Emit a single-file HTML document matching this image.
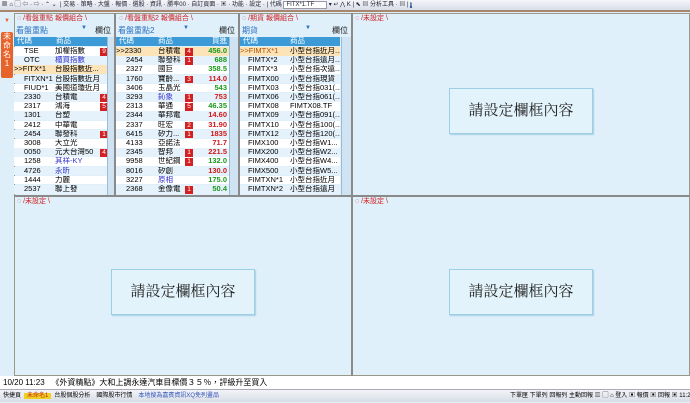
<!DOCTYPE html>
<html><head><meta charset="utf-8"><style>
*{margin:0;padding:0;box-sizing:border-box}
body{width:690px;height:402px;overflow:hidden;background:#dfeffa;font-family:"Liberation Sans","Noto Sans CJK TC",sans-serif;position:relative;font-size:8px}
.a{position:absolute}
.tb{left:0;top:0;width:690px;height:12px;background:linear-gradient(#f4f6fa,#d8dde8);border-bottom:2px solid #a8876e;font-size:6px;color:#223;white-space:nowrap;line-height:11px}
.tab{font-size:7px;color:#d02020;line-height:8px}
.row{position:absolute;height:8.7px;line-height:8.7px;font-size:7.5px;white-space:nowrap;overflow:hidden}
.box{background:#e2f3fb;border:1px solid #9ccfe6;box-shadow:1px 1px 1px #a8d0e0;font-size:15px;color:#222;text-align:center;font-family:"Liberation Serif","Noto Serif CJK SC",serif}
.b{display:inline-block;background:#d42020;color:#fff;width:8px;height:8px;line-height:8px;text-align:center;font-size:6.5px}
.sb{background:#cfe3f3;border-left:1px solid #9bbcd8}
.cl{overflow:hidden;display:inline-block}
</style></head><body>
<div class="a tb">&nbsp;▦ ⌂ ▢ ⇦ · ⇨ · ⌃ ⌄ &nbsp;| 交易 · 策略 · 大盤 · 報價 · 選股 · 資訊 · 勝率00 · 自訂頁面 · ▣ · 功能 · 設定 · | 代碼 <span style="background:#fff;border:1px solid #99a;padding:0 12px 0 2px">FITX*1.TF</span> ▾ ↵ ⋀ K | ⬉ ▤ 分析工具 · ▤ | <span style="background:#3b5998;color:#fff">f</span></div>
<div class="a" style="left:0;top:14px;width:14px;height:362px;background:#dfeffa"></div>
<div class="a" style="left:1px;top:32px;width:12px;height:46px;background:#e8632a;color:#fff;font-size:8px;line-height:9px;text-align:center;border-radius:2px">未命名1</div>
<div class="a" style="left:4px;top:18px;color:#e8632a;font-size:6px">▼</div>

<div class="a" style="left:14px;top:13px;width:676px;height:363px;background:#dff0fb;border:1px solid #998"></div>
<div class="a" style="left:351px;top:13px;width:2px;height:363px;background:#8a8a8a"></div>
<div class="a" style="left:14px;top:195px;width:676px;height:2px;background:#8a8a8a"></div>
<div class="a" style="left:114px;top:13px;width:2px;height:182px;background:#8a8a8a"></div>
<div class="a" style="left:238px;top:13px;width:2px;height:182px;background:#8a8a8a"></div>

<div class="a tab" style="left:17px;top:15px">◌ /看盤重點 報價組合 \</div>
<div class="a tab" style="left:119px;top:15px">◌ /看盤重點2 報價組合 \</div>
<div class="a tab" style="left:242px;top:15px">◌ /期貨 報價組合 \</div>
<div class="a tab" style="left:355px;top:15px">◌ /未設定 \</div>
<div class="a tab" style="left:17px;top:198px">◌ /未設定 \</div>
<div class="a tab" style="left:355px;top:198px">◌ /未設定 \</div>

<div class="a" style="left:16px;top:25px;width:98px;font-size:8px;color:#2a6fc0">看盤重點<span style="position:absolute;left:65px;color:#2a6fc0;font-size:6px">▼</span><span style="position:absolute;left:79px;color:#222">欄位</span></div>
<div class="a" style="left:118px;top:25px;width:120px;font-size:8px;color:#2a6fc0">看盤重點2<span style="position:absolute;left:65px;font-size:6px">▼</span><span style="position:absolute;left:101px;color:#222">欄位</span></div>
<div class="a" style="left:242px;top:25px;width:108px;font-size:8px;color:#2a6fc0">期貨<span style="position:absolute;left:63px;font-size:6px">▼</span><span style="position:absolute;left:90px;color:#222">欄位</span></div>

<div id="g"></div>

<div class="a box" style="left:449px;top:88px;width:144px;height:46px;line-height:44px">請設定欄框內容</div>
<div class="a box" style="left:111px;top:269px;width:144px;height:46px;line-height:44px">請設定欄框內容</div>
<div class="a box" style="left:449px;top:269px;width:144px;height:46px;line-height:44px">請設定欄框內容</div>

<div class="a" style="left:0;top:376px;width:690px;height:13px;background:#fff;font-size:8px;line-height:13px;padding-left:3px;white-space:nowrap">10/20 11:23 &nbsp;&nbsp;《外資精點》大和上調永達汽車目標價３５％，評級升至買入</div>
<div class="a" style="left:0;top:389px;width:690px;height:13px;background:linear-gradient(#f2f4f8,#d8dde6);font-size:6px;line-height:13px;white-space:nowrap;border-top:1px solid #aab">
<span style="padding:0 3px">快捷頁</span><span style="background:#f0d020;color:#c02020;padding:0 3px">未命名1</span><span style="padding:0 3px">台股個股分析</span><span style="padding:0 3px">國際股市行情</span><span style="color:#3355bb;padding:0 3px">本地搜為嘉賓資訊XQ免列畫品</span>
<span style="position:absolute;left:510px">下單匣 下單列 回報列 主動回報 ▥ ▢ ⌂ 登入 ▣ 報價 ▣ 回報 ▣ 11:24:53</span></div>

<script>
var g=document.getElementById('g'),h='';
function r(x,y,w,bg,cells){h+='<div class="row" style="left:'+x+'px;top:'+y+'px;width:'+w+'px;background:'+bg+'">'+cells+'</div>';}
function c(x,t,s){return '<span style="position:absolute;left:'+x+'px;'+(s||'')+'">'+t+'</span>';}
var hs='color:#fff;font-size:7.5px';
r(14,37,93,'#3c9ad6',c(3,'代碼',hs)+c(42,'商品',hs));
r(116,37,113,'#3c9ad6',c(3,'代碼',hs)+c(42,'商品',hs)+c(96,'買進',hs));
r(240,37,100,'#3c9ad6',c(3,'代碼',hs)+c(50,'商品',hs));
var p1=[['TSE','加權指數','9'],['OTC','櫃買指數','',1],['>>FITX*1','台股指數近...'],['FITXN*1','台股指數近月'],['FIUD*1','美國道瓊近月'],['2330','台積電','4'],['2317','鴻海','5'],['1301','台塑'],['2412','中華電'],['2454','聯發科','1'],['3008','大立光'],['0050','元大台灣50','4'],['1258','其祥-KY','',1],['4726','永昕','',1],['1444','力麗'],['2537','聯上發']];
var p2=[['>>2330','台積電','4','456.0','g'],['2454','聯發科','1','688','g'],['2327','國巨','','358.5','g'],['1760','寶齡...','3','114.0','r'],['3406','玉晶光','','543','g'],['3293','鈊象','1','753','r',1],['2313','華通','5','46.35','g'],['2344','華邦電','','14.60','r'],['2337','旺宏','2','31.90','r'],['6415','矽力...','1','1835','r'],['4133','亞諾法','','71.7','r'],['2345','智邦','1','221.5','r'],['9958','世紀鋼','1','132.0','g'],['8016','矽創','','130.0','r'],['3227','原相','','175.0','g',1],['2368','金像電','1','50.4','g']];
var p3=[['>>FIMTX*1','小型台指近月...'],['FIMTX*2','小型台指遠月...'],['FIMTX*3','小型台指次遠...'],['FIMTX00','小型台指現貨'],['FIMTX03','小型台指031(...'],['FIMTX06','小型台指061(...'],['FIMTX08','FIMTX08.TF'],['FIMTX09','小型台指091(...'],['FIMTX10','小型台指100(...'],['FIMTX12','小型台指120(...'],['FIMX100','小型台指W1...'],['FIMX200','小型台指W2...'],['FIMX400','小型台指W4...'],['FIMX500','小型台指W5...'],['FIMTXN*1','小型台指近月'],['FIMTXN*2','小型台指遠月']];
for(var i=0;i<16;i++){var y=47+i*9.2,bg=i%2?'#e6f2fb':'#fff';
var a=p1[i];r(14,y,93,i==2?'#fde3b8':bg,c(a[0].indexOf('>>')==0?0:10,a[0])+c(41,a[1],'width:'+(a[2]?44:52)+'px;overflow:hidden;'+(a[3]?'color:#3333cc':''))+(a[2]?c(86,'<span class="b">'+a[2]+'</span>'):''));
var b=p2[i];r(116,y,113,i==0?'#fde3b8':bg,c(b[0].indexOf('>>')==0?0:10,b[0])+c(42,b[1],'width:'+(b[2]?26:32)+'px;overflow:hidden;'+(b[5]?'color:#3333cc':''))+(b[2]?c(69,'<span class="b">'+b[2]+'</span>'):'')+c(0,b[3],'left:auto;right:2px;font-weight:bold;color:'+(b[4]=='g'?'#1a9a1a':'#d01818')));
var d=p3[i];r(240,y,100,i==0?'#fde3b8':bg,c(d[0].indexOf('>>')==0?0:8,d[0],i==0?'color:#b05000':'')+c(50,d[1],'width:50px;overflow:hidden'));}
h+='<div class="a sb" style="left:107px;top:37px;width:7px;height:158px"></div><div class="a sb" style="left:229px;top:37px;width:9px;height:158px"></div><div class="a sb" style="left:341px;top:37px;width:10px;height:158px"></div>';
g.innerHTML=h;
</script>
</body></html>
